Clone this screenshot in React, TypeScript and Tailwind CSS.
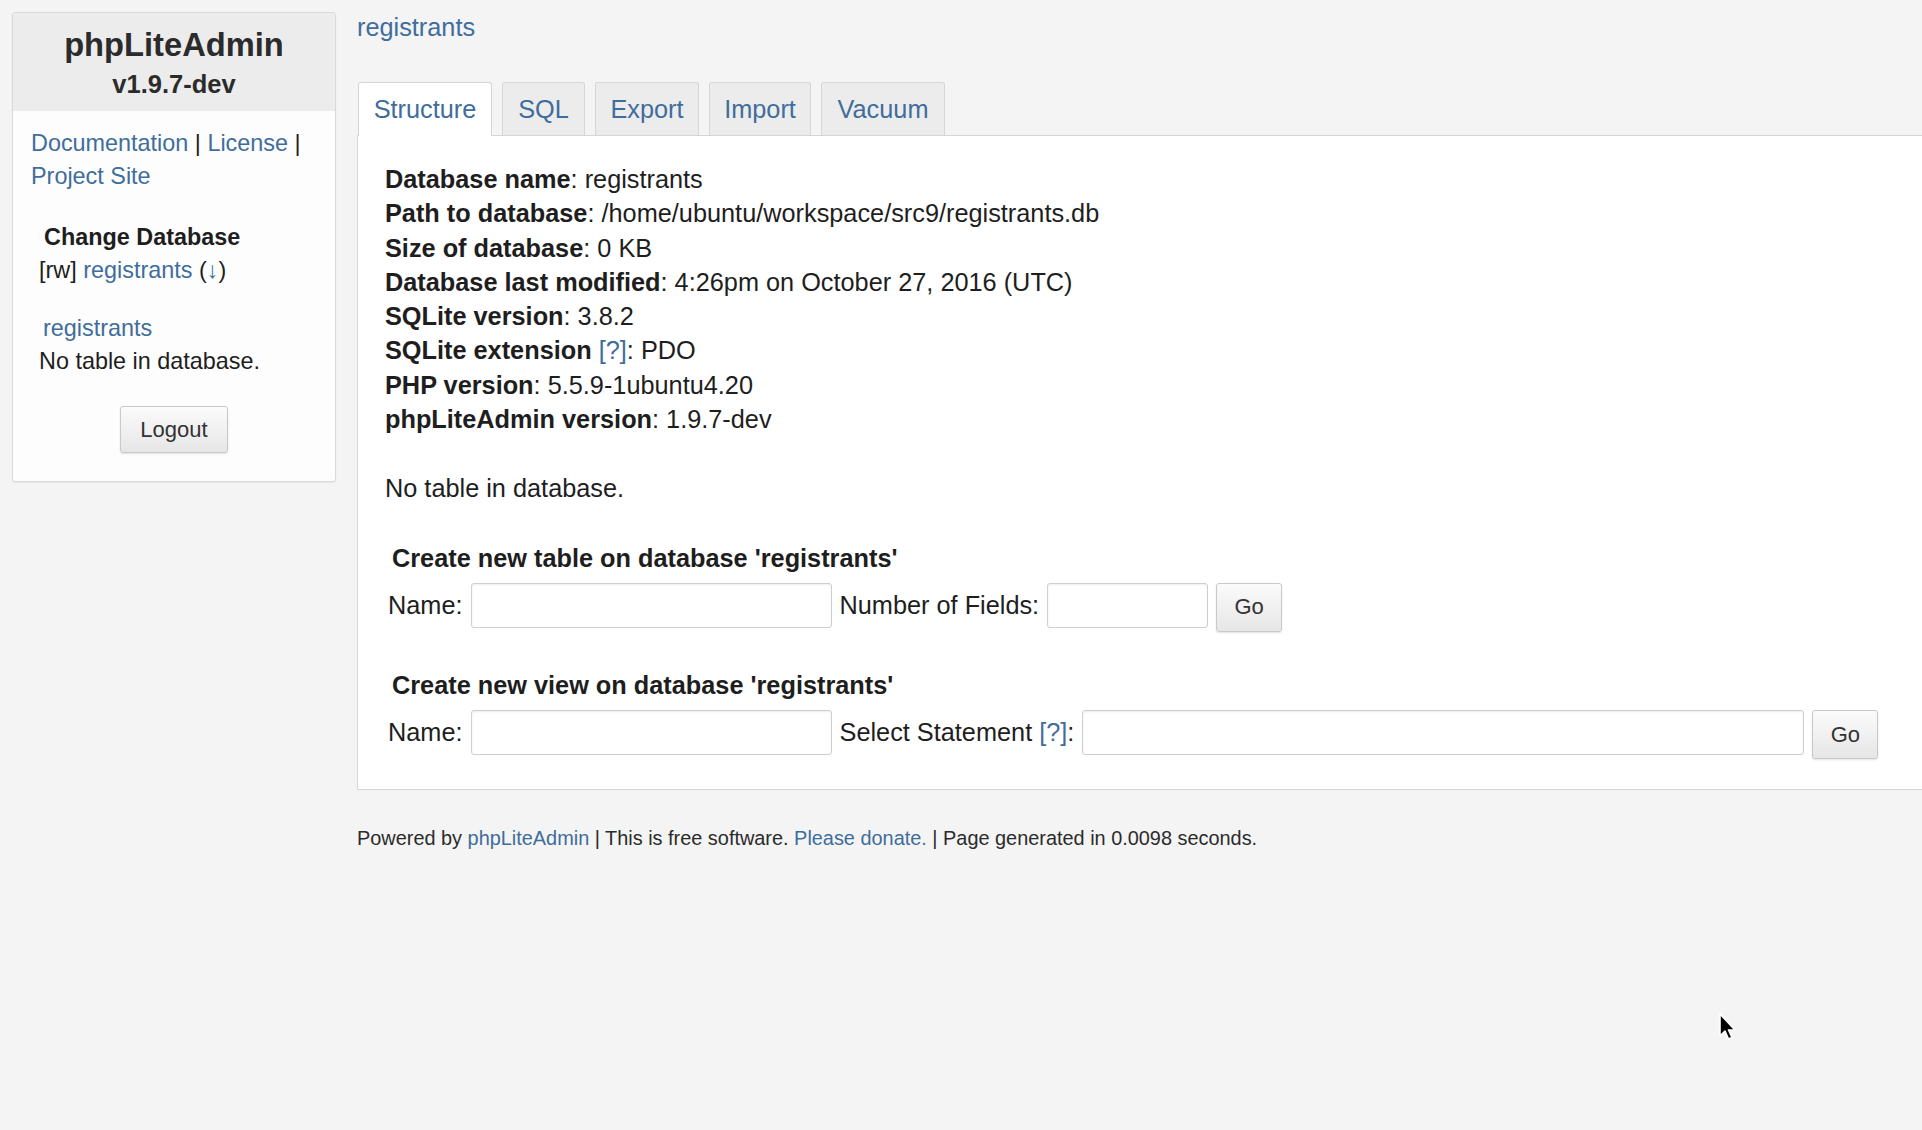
import React from "react";

const link = "text-[#3f6d9c]";

const infoRows: [string, React.ReactNode][] = [
  ["Database name", "registrants"],
  ["Path to database", "/home/ubuntu/workspace/src9/registrants.db"],
  ["Size of database", "0 KB"],
  ["Database last modified", "4:26pm on October 27, 2016 (UTC)"],
  ["SQLite version", "3.8.2"],
  ["SQLite extension", "PDO"],
  ["PHP version", "5.5.9-1ubuntu4.20"],
  ["phpLiteAdmin version", "1.9.7-dev"],
];

const tabs: [string, string][] = [
  ["Structure", "w-[134px]"],
  ["SQL", "w-[83px]"],
  ["Export", "w-[104px]"],
  ["Import", "w-[102px]"],
  ["Vacuum", "w-[124px]"],
];

const TextInput = ({ w }: { w: string }) => (
  <input
    type="text"
    className={`${w} h-[45px] shrink-0 rounded-[3px] border border-[#cfcfcf] bg-white shadow-[inset_0_1px_2px_rgba(0,0,0,0.08)] outline-none`}
  />
);

const GoButton = () => (
  <button className="h-[49px] w-[66px] shrink-0 rounded-[3px] border border-[#c9c9c9] bg-gradient-to-b from-[#fbfbfb] to-[#e6e6e6] text-[22px] text-[#333] shadow-[0_1px_2px_rgba(0,0,0,0.12)]">
    Go
  </button>
);

const Cursor = () => (
  <svg
    className="absolute left-[1717px] top-[1012px]"
    width="22"
    height="30"
    viewBox="0 0 22 30"
  >
    <path
      d="M3 2 L3 24 L8 19 L11.5 27 L15 25.5 L11.5 18 L18 18 Z"
      fill="#000"
      stroke="#fff"
      strokeWidth="1.6"
      strokeLinejoin="round"
    />
  </svg>
);

export default function App() {
  return (
    <div className="relative min-h-[1130px] overflow-hidden bg-[#f4f4f4] font-['Liberation_Sans',Arial,sans-serif] text-[#1e1e1e]">
      <div className="flex items-start">
        {/* sidebar */}
        <div className="ml-[12px] mt-[12px] w-[324px] shrink-0 rounded-[3px] border border-[#d9d9d9] bg-[#fdfdfd] shadow-[0_1px_2px_rgba(0,0,0,0.06)]">
          <div className="bg-[#ececec] pb-[12px] pt-[13px] text-center font-bold text-[#2b2b2b]">
            <div className="text-[32.7px] leading-[38px]">phpLiteAdmin</div>
            <div className="mt-[5px] text-[25.5px] leading-[30px]">v1.9.7-dev</div>
          </div>
          <div className="pb-[28px] pl-[18px] pr-[12px] pt-[16px] text-[23.4px] leading-[33px]">
            <div>
              <a className={link}>Documentation</a> | <a className={link}>License</a> |{" "}
              <a className={link}>Project Site</a>
            </div>
            <div className="mt-[28px] pl-[13px] font-bold">Change Database</div>
            <div className="pl-[8px]">
              [rw] <a className={link}>registrants</a> (<a className={link}>↓</a>)
            </div>
            <div className="mt-[25px] pl-[12px]">
              <a className={link}>registrants</a>
            </div>
            <div className="pl-[8px]">No table in database.</div>
            <div className="mt-[28px] flex justify-center pr-[6px]">
              <button className="h-[47px] w-[108px] rounded-[3px] border border-[#c9c9c9] bg-gradient-to-b from-[#fbfbfb] to-[#e6e6e6] text-[22px] text-[#333] shadow-[0_1px_2px_rgba(0,0,0,0.12)]">
                Logout
              </button>
            </div>
          </div>
        </div>

        {/* main */}
        <div className="ml-[21px] min-w-0 flex-1 pt-[12px]">
          <a className={`${link} block text-[25.3px] leading-[30px]`}>registrants</a>

          <div className="relative z-10 mt-[40px] flex gap-[10px] pl-px">
            {tabs.map(([t, w], i) => (
              <div
                key={t}
                className={
                  i === 0
                    ? `-mb-px h-[54px] ${w} rounded-t-[3px] border border-b-0 border-[#d6d6d6] bg-white text-center text-[25.3px] leading-[52px] ${link}`
                    : `h-[53px] ${w} rounded-t-[3px] border border-b-0 border-[#d6d6d6] bg-[#ececec] text-center text-[25.3px] leading-[52px] ${link}`
                }
              >
                {t}
              </div>
            ))}
          </div>

          <div className="border border-r-0 border-[#d6d6d6] bg-white pb-[30px] pl-[27px] pt-[26px] text-[25.3px] leading-[34.3px]">
            {infoRows.map(([k, v]) => (
              <div key={k}>
                <b>{k}</b>
                {k === "SQLite extension" ? (
                  <>
                    {" "}
                    <a className={link}>[?]</a>
                  </>
                ) : null}
                : {v}
              </div>
            ))}

            <div className="mt-[35px]">No table in database.</div>

            <div className="mt-[35px] pl-[7px] font-bold">Create new table on database 'registrants'</div>
            <div className="mt-[8px] flex items-start gap-[8px] pl-[3px]">
              <span className="leading-[45px]">Name:</span>
              <TextInput w="w-[361px]" />
              <span className="leading-[45px]">Number of Fields:</span>
              <TextInput w="w-[161px]" />
              <GoButton />
            </div>

            <div className="mt-[36px] pl-[7px] font-bold">Create new view on database 'registrants'</div>
            <div className="mt-[8px] flex items-start gap-[8px] pl-[3px]">
              <span className="leading-[45px]">Name:</span>
              <TextInput w="w-[361px]" />
              <span className="leading-[45px]">
                Select Statement <a className={link}>[?]</a>:
              </span>
              <TextInput w="w-[722px]" />
              <GoButton />
            </div>
          </div>

          <div className="mt-[36px] text-[19.9px] leading-[24px] text-[#2b2b2b]">
            Powered by <a className={link}>phpLiteAdmin</a> | This is free software.{" "}
            <a className={link}>Please donate.</a> | Page generated in 0.0098 seconds.
          </div>
        </div>
      </div>

      <Cursor />
    </div>
  );
}
